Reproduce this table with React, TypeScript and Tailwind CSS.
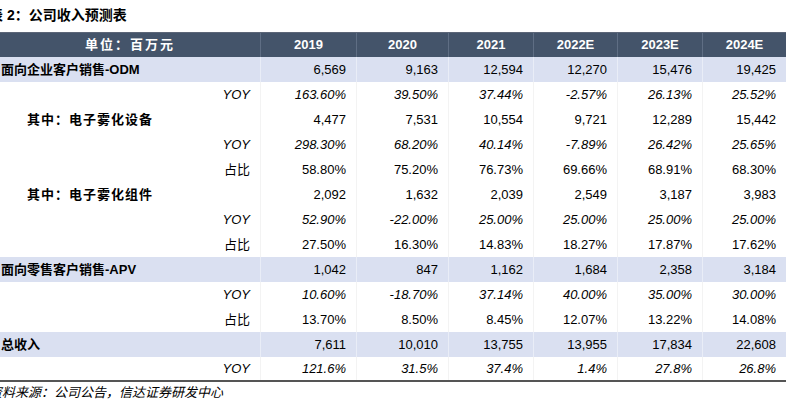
const COLS = ["2019", "2020", "2021", "2022E", "2023E", "2024E"];

type Row = {
  label: string;
  kind: "main" | "sub" | "yoy" | "share";
  values: string[];
};

const ROWS: Row[] = [
  { label: "面向企业客户销售-ODM", kind: "main", values: ["6,569", "9,163", "12,594", "12,270", "15,476", "19,425"] },
  { label: "YOY", kind: "yoy", values: ["163.60%", "39.50%", "37.44%", "-2.57%", "26.13%", "25.52%"] },
  { label: "其中：电子雾化设备", kind: "sub", values: ["4,477", "7,531", "10,554", "9,721", "12,289", "15,442"] },
  { label: "YOY", kind: "yoy", values: ["298.30%", "68.20%", "40.14%", "-7.89%", "26.42%", "25.65%"] },
  { label: "占比", kind: "share", values: ["58.80%", "75.20%", "76.73%", "69.66%", "68.91%", "68.30%"] },
  { label: "其中：电子雾化组件", kind: "sub", values: ["2,092", "1,632", "2,039", "2,549", "3,187", "3,983"] },
  { label: "YOY", kind: "yoy", values: ["52.90%", "-22.00%", "25.00%", "25.00%", "25.00%", "25.00%"] },
  { label: "占比", kind: "share", values: ["27.50%", "16.30%", "14.83%", "18.27%", "17.87%", "17.62%"] },
  { label: "面向零售客户销售-APV", kind: "main", values: ["1,042", "847", "1,162", "1,684", "2,358", "3,184"] },
  { label: "YOY", kind: "yoy", values: ["10.60%", "-18.70%", "37.14%", "40.00%", "35.00%", "30.00%"] },
  { label: "占比", kind: "share", values: ["13.70%", "8.50%", "8.45%", "12.07%", "13.22%", "14.08%"] },
  { label: "总收入", kind: "main", values: ["7,611", "10,010", "13,755", "13,955", "17,834", "22,608"] },
  { label: "YOY", kind: "yoy", values: ["121.6%", "31.5%", "37.4%", "1.4%", "27.8%", "26.8%"] },
];

const GRID = "grid grid-cols-[260px_96px_92px_85px_84px_85px_84px]";
const CJK = "font-['Liberation_Sans','Noto_Sans_CJK_SC',sans-serif]";

function LabelCell({ row }: { row: Row }) {
  if (row.kind === "main") {
    return <div className="flex items-center pl-[1px] font-bold text-[13px]">{row.label}</div>;
  }
  if (row.kind === "sub") {
    return <div className="flex items-center pl-[27px] font-bold text-[13px] tracking-[1px]">{row.label}</div>;
  }
  return (
    <div className={`flex items-center justify-end pr-[10px] text-[13px] ${row.kind === "yoy" ? "italic" : ""}`}>
      {row.label}
    </div>
  );
}

export default function App() {
  return (
    <div className={`w-[811px] h-[420px] overflow-hidden bg-white text-black ${CJK}`}>
      <div className="ml-[-11px] pt-[6px] h-[32px] text-[14px] font-bold leading-[18px]">表 2：公司收入预测表</div>

      <div className="w-[786px]">
        <div className={`${GRID} h-[25px] bg-[#44546a] text-white text-[13px] font-bold border-t border-[#5c6678]`}>
          <div className="flex items-center justify-center tracking-[2px]">单位：百万元</div>
          {COLS.map((c) => (
            <div key={c} className="flex items-center justify-center border-l border-[#5f6e84]">
              {c}
            </div>
          ))}
        </div>

        {ROWS.map((row, i) => {
          const shaded = row.kind === "main";
          const last = i === ROWS.length - 1;
          return (
            <div
              key={i}
              className={`${GRID} h-[25px] ${shaded ? "bg-[#dae0f1]" : "bg-white"} ${last ? "border-b-2 border-[#555]" : ""}`}
            >
              <LabelCell row={row} />
              {row.values.map((v, j) => (
                <div
                  key={j}
                  className={`flex items-center justify-end pr-[10px] text-[13px] border-l ${
                    shaded ? "border-[#e9edf7]" : "border-[#f3f3f3]"
                  } ${row.kind === "yoy" ? "italic" : ""}`}
                >
                  {v}
                </div>
              ))}
            </div>
          );
        })}
      </div>

      <div className="ml-[-11px] mt-[3px] text-[13px] italic leading-[16px]">资料来源：公司公告，信达证券研发中心</div>
    </div>
  );
}
